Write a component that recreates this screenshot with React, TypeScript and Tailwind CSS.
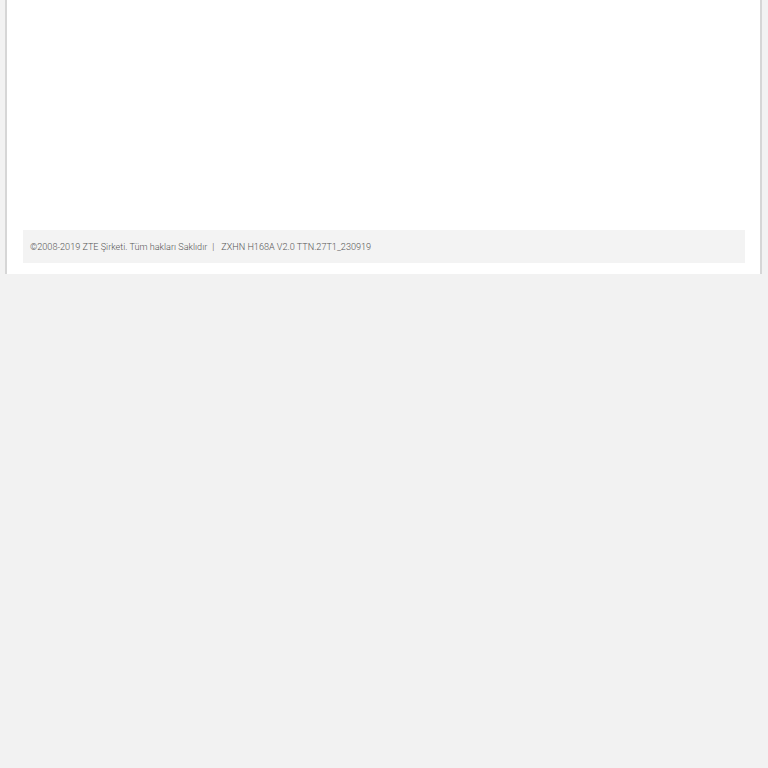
import React from 'react';

const App: React.FC = () => {
  return (
    <div className="min-h-[768px] w-full bg-[#f2f2f2]" style={{ fontFamily: 'Roboto, "Liberation Sans", sans-serif' }}>
      <div className="ml-[5px] w-[757px] border-x-2 border-[#d6d6d6] bg-white">
        {/* page content area (empty) */}
        <div className="h-[230px]" />

        {/* Footer */}
        <div className="pl-4 pr-[15px] pb-[11px]">
          <div className="flex h-[33px] items-center bg-[#f3f3f3] px-[7px] pt-[3px] text-[9.1px] font-light text-[#555]">
            <span>©2008-2019 ZTE Şirketi. Tüm hakları Saklıdır</span>
            <span className="mx-[5px]">|</span>
            <span className="ml-[2px]">ZXHN H168A V2.0 TTN.27T1_230919</span>
          </div>
        </div>
      </div>
    </div>
  );
};

export default App;
